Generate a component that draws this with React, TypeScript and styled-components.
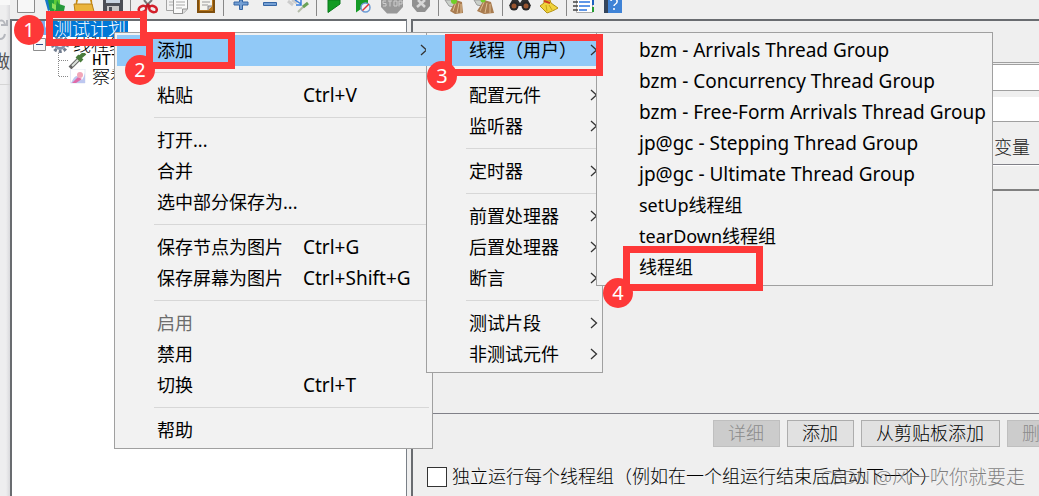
import React from "react";
import styled, { createGlobalStyle, css } from "styled-components";

const uiFont = '"Noto Sans", "Noto Sans CJK SC", sans-serif';
const swingFont = '"Liberation Serif", "Noto Sans CJK SC", serif';

const GlobalStyle = createGlobalStyle`
  * { box-sizing: border-box; }
  html, body { margin: 0; }
  body { background: #efefef; overflow: hidden; font-family: ${uiFont}; font-size: 18px; color: #000; }
  button, input { font: inherit; color: inherit; margin: 0; }
`;

const Desktop = styled.div`
  position: relative;
  display: flex;
  min-height: 100vh;
  overflow: hidden;
`;

const Backdrop = styled.aside`
  flex: 0 0 10px;
  display: flex;
  flex-direction: column;
  overflow: hidden;
  color: #555;
  background: linear-gradient(90deg, #eeeeef 0, #eeeeef 6px, #d9d9dc 10px);
`;

const BackdropIcon = styled.div`
  height: 46px;
  padding-top: 14px;
  border-top: 5px solid #f8f8f8;
  svg { display: block; }
`;

const BackdropLabel = styled.div`
  display: flex;
  justify-content: flex-end;
  height: 39px;
  line-height: 32px;
  border-bottom: 1px solid #d5d5d5;
  font-family: ${swingFont};
`;

const Window = styled.div`
  flex: 1;
  min-width: 0;
  display: flex;
  flex-direction: column;
`;

const Toolbar = styled.div`
  display: flex;
  height: 19px;
  padding-left: 1px;
  background: #efefef;
`;

const ToolButton = styled.button`
  flex: 0 0 29px;
  height: 16px;
  padding: 0;
  border: 0;
  background: none;
  display: flex;
  justify-content: center;
`;

const ToolDivider = styled.span`
  flex: 0 0 6px;
  height: 16px;
  display: flex;
  justify-content: center;
  &::after { content: ""; width: 1px; background: #888; }
`;

const Workspace = styled.div`
  flex: 1;
  display: flex;
  gap: 4px;
`;

const TreePane = styled.nav`
  flex: 0 0 397px;
  border: 1px solid #7a8087;
  border-top: 2px solid #696c70;
  border-left: 2px solid #696c70;
  border-bottom: 0;
  background: #fff;
`;

const TreeRow = styled.div<{ $indent: number }>`
  display: flex;
  align-items: center;
  gap: 3px;
  height: 16px;
  padding-left: ${(p) => p.$indent}px;
  overflow: hidden;
  white-space: nowrap;
  font-family: ${swingFont};
  font-weight: 300;
  line-height: 16px;
  svg { flex: none; }
`;

const SelectedLabel = styled.span`
  height: 16px;
  padding: 0 2px 0 1px;
  background: #0078d7;
  color: #fff;
`;

const MonoLabel = styled.span`
  font-family: "Liberation Mono", monospace;
  font-size: 16px;
  font-weight: 400;
`;

const Editor = styled.main`
  flex: 1;
  min-width: 0;
  display: flex;
  flex-direction: column;
  border-top: 2px solid #696c70;
  border-left: 2px solid #696c70;
  font-family: ${swingFont};
  font-weight: 300;
`;

const Fields = styled.div`
  display: flex;
  flex-direction: column;
  gap: 6px;
  margin-top: 41px;
  border-top: 1px solid #a0a0a0;
  padding-top: 1px;
`;

const TextField = styled.input`
  width: 100%;
  height: 27px;
  padding: 0 4px;
  border: 0;
  border-top: 1px solid #a0a0a0;
  border-bottom: 1px solid #a0a0a0;
  background: #fff;
  & + & { height: 25px; border-top: 0; }
`;

const SectionTitle = styled.div`
  height: 42px;
  padding: 6px 9px 0 0;
  line-height: 40px;
  text-align: right;
  color: #222;
`;

const VariableTable = styled.div`
  flex: none;
  height: 250px;
  border-top: 1px solid #808088;
  border-bottom: 1px solid #808088;
`;

const TableHeader = styled.div`
  height: 26px;
  border-top: 1px solid #fff;
  border-bottom: 2px solid #808080;
`;

const ButtonRow = styled.div`
  display: flex;
  gap: 7px;
  padding: 6px 0 0 300px;
  overflow: hidden;
`;

const PushButton = styled.button`
  flex: none;
  height: 27px;
  padding: 0 15px 0 14px;
  border: 1px solid #adadad;
  background: #e1e1e1;
  line-height: 24px;
  white-space: nowrap;
  &:disabled { background: #cccccc; border-color: #bfbfbf; color: #8b8b8b; }
`;

const Footer = styled.div`
  display: flex;
  align-items: center;
  padding: 20px 0 0 14px;
  white-space: nowrap;
`;

const CheckLabel = styled.label`
  display: flex;
  align-items: center;
  gap: 5px;
  height: 20px;
  line-height: 20px;
`;

const CheckBox = styled.input`
  appearance: none;
  flex: none;
  width: 20px;
  height: 20px;
  border: 1px solid #333;
  background: #fff;
`;

const Watermark = styled.div`
  position: absolute;
  right: 14px;
  bottom: 5px;
  font-size: 19px;
  line-height: 28px;
  font-weight: 300;
  color: rgba(90, 90, 90, 0.75);
`;

const MenuPanel = styled.div<{ $left: number; $width: number }>`
  position: absolute;
  top: 32px;
  left: ${(p) => p.$left}px;
  width: ${(p) => p.$width}px;
  padding: 2px;
  border: 1px solid #a0a0a0;
  background: #f2f2f2;
`;

const MenuItem = styled.button<{ $active?: boolean; $joined?: boolean }>`
  display: grid;
  grid-template-columns: 146px 1fr;
  align-items: center;
  position: relative;
  width: 100%;
  height: 31px;
  padding: 0 0 1px 40px;
  border: 0;
  background: none;
  text-align: left;
  line-height: 30px;
  white-space: nowrap;
  &:disabled { color: #6d6d6d; }
  ${(p) => p.$active && css`background: #91c9f7;`}
  ${(p) => p.$joined && css`box-shadow: -3px 0 #91c9f7, 2px 0 #91c9f7;`}
`;

const MenuText = styled.span<{ $latin?: boolean }>`
  height: 30px;
  font-size: ${(p) => (p.$latin ? 19 : 18)}px;
`;

const MenuArrow = styled.svg`
  position: absolute;
  right: 2px;
  top: 9px;
`;

const MenuRule = styled.hr`
  height: 1px;
  margin: 6px 1px 7px 37px;
  border: 0;
  background: #d7d7d7;
`;

const Highlight = styled.div<{ $x: number; $y: number; $w: number; $h: number }>`
  position: absolute;
  left: ${(p) => p.$x}px;
  top: ${(p) => p.$y}px;
  width: ${(p) => p.$w}px;
  height: ${(p) => p.$h}px;
  border: 7px solid #fe3838;
  pointer-events: none;
`;

const StepBadge = styled.div<{ $x: number; $y: number }>`
  position: absolute;
  left: ${(p) => p.$x}px;
  top: ${(p) => p.$y}px;
  width: 30px;
  height: 30px;
  border-radius: 50%;
  background: #fe3838;
  color: #fff;
  font-family: "Noto Sans", sans-serif;
  font-size: 20px;
  line-height: 29px;
  text-align: center;
`;

const icons: Record<string, React.ReactNode> = {
  新建: <path d="M3.500 0V12.500H20.500V0" fill="#f7f7f7" stroke="#8b8b8b" />,
  模板: (
    <>
      <path d="M2 0L5 11L10 9L8 0Z" fill="#1878c8" />
      <path d="M5 0L7 11L14 13L12 0Z" fill="#20a040" />
      <path d="M11 0V12L17 9V0Z" fill="#5ccb38" />
      <path d="M14 0L16 4L22 6L21 11L12 12Z" fill="#25993b" />
      <path d="M9 3l4 2v5l-4-2z" fill="#8be05a" />
    </>
  ),
  打开: (
    <>
      <path d="M4 0H20L21 11H3Z" fill="#c68a12" />
      <path d="M6 0H18L19 4H5Z" fill="#f2f2ee" />
      <path d="M2 4H20L22 11.500H3Z" fill="#eab43b" stroke="#b98016" />
    </>
  ),
  保存: (
    <>
      <path d="M2 0H22V13H2Z" fill="#4c4f56" />
      <path d="M5 0H19V3H5Z" fill="#c9d5e2" />
      <path d="M6 6H18V12H6Z" fill="#c8c8c8" />
      <path d="M8 7H11V12H8Z" fill="#4c4f56" />
    </>
  ),
  剪切: (
    <>
      <path d="M8 0L13 6M16 0L10 6" stroke="#777" strokeWidth="2" />
      <ellipse cx="6.500" cy="9" rx="4" ry="3" fill="none" stroke="#d3202b" strokeWidth="2.500" transform="rotate(-25 6.500 9)" />
      <ellipse cx="17" cy="9" rx="4" ry="3" fill="none" stroke="#d3202b" strokeWidth="2.500" transform="rotate(25 17 9)" />
      <path d="M9 6L12 3L15 6L12 8Z" fill="#c41a26" />
    </>
  ),
  复制: (
    <>
      <path d="M1.500 0V10.500H14V0" fill="#f1f1f1" stroke="#a3a3a3" />
      <path d="M4 2H8M4 5H8" stroke="#b0b0b0" />
      <path d="M8.500 0V13.500H18L22.500 9V0" fill="#fafafa" stroke="#929292" />
      <path d="M11 2H20M11 5H20M11 8H17" stroke="#aaa" />
      <path d="M17.500 13.500V9H22" fill="#ddd" stroke="#929292" />
    </>
  ),
  粘贴: (
    <>
      <path d="M4 0V12H20V0" fill="#b97920" stroke="#80500e" strokeWidth="2" />
      <path d="M6 0V10H14L18 6V0Z" fill="#f5f5ef" />
      <path d="M8 2H16M8 5H14" stroke="#999" />
      <path d="M14 10V6H18" fill="#ccc" stroke="#888" />
    </>
  ),
  展开: <path d="M10.500 0H13.500V2H19V5H13.500V9.500H10.500V5H5V2H10.500Z" fill="#75a0d4" stroke="#3465a4" />,
  折叠: <path d="M5.500 2.500H18.500V5.500H5.500Z" fill="#75a0d4" stroke="#3465a4" />,
  切换: (
    <>
      <path d="M1 1L6 5M5 0L10 3" stroke="#ccc" strokeWidth="3" />
      <path d="M8 0L14 4M14 0V5H9" stroke="#3a7edb" strokeWidth="1.500" fill="none" />
      <path d="M11 12L17 6" stroke="#b4bca9" strokeWidth="2" />
      <path d="M16 7L21 3" stroke="#69a257" strokeWidth="3" />
    </>
  ),
  启动: <path d="M6 0V12.500L18 4V0Z" fill="#129b24" stroke="#08791a" />,
  立即启动: (
    <>
      <path d="M5 0V12.500L17 4V0Z" fill="#149a26" />
      <circle cx="14.500" cy="7.500" r="4.500" fill="#eef3fa" stroke="#6c9bd4" strokeWidth="1.500" />
      <path d="M11.500 10.500L18 4" stroke="#df3434" strokeWidth="1.500" />
    </>
  ),
  停止: (
    <>
      <path d="M1 0V7L7 13.500H17L23 7V0Z" fill="#989898" />
      <path d="M6 1H3V3.500H6V6H3M8 1H12M10 1V6.500M14 1H17V6H14ZM19 6.500V1H22V4H19" fill="none" stroke="#cecece" />
    </>
  ),
  关闭: (
    <>
      <path d="M3 0V6L8 12H16L21 6V0Z" fill="#919191" />
      <path d="M9 0L16 7M16 0L8 7" stroke="#d8d8d8" strokeWidth="2.500" />
    </>
  ),
  清除: (
    <>
      <path d="M1 0L5 6L10 7L12 0Z" fill="#cad0ca" stroke="#999" />
      <path d="M12 0L18 2L19 13L11 14L6 11Z" fill="#a97c50" />
      <path d="M12 2L9 11M15 3L13 13M17 4L17 13" stroke="#dfbd91" />
      <circle cx="10" cy="1" r="3" fill="#70cf29" />
    </>
  ),
  清除全部: (
    <>
      <path d="M1 0L4 5L9 6L11 0Z" fill="#cad0ca" stroke="#999" />
      <path d="M11 0L18 2L21 13L11 14L4 11Z" fill="#a97c50" />
      <path d="M11 2L7 11M14 3L12 13M17 4L17 13" stroke="#dfbd91" />
      <circle cx="10" cy="0" r="2.500" fill="#70cf29" />
    </>
  ),
  搜索: (
    <>
      <path d="M4 0H10L12 3L14 0H20L23 6H1Z" fill="#303030" />
      <circle cx="6" cy="6" r="4.500" fill="#262626" />
      <circle cx="18" cy="6" r="4.500" fill="#262626" />
      <circle cx="6" cy="6" r="2.500" fill="#9a5630" />
      <circle cx="18" cy="6" r="2.500" fill="#9a5630" />
    </>
  ),
  重置搜索: (
    <>
      <path d="M7 0H13L14 3L21 8C18 10 13 12 10 13L3 6L7 3Z" fill="#f0d33c" stroke="#b39112" />
      <path d="M7 1L13 3" stroke="#cf3b22" strokeWidth="2" />
      <path d="M9 5L10 11M12 5L15 10" stroke="#c8a518" />
    </>
  ),
  函数助手: (
    <>
      <path d="M4.500 0V12.500H20.500V0" fill="#fff" stroke="#aaa" />
      <path d="M7 2H18M7 6H18M7 10H15" stroke="#2d76df" strokeWidth="1.500" />
      <path d="M1 2H6M1 6H6M1 10H6" stroke="#444" strokeWidth="1.500" />
      <path d="M21 0V5" stroke="#1d60c0" strokeWidth="2" />
      <path d="M21 7V12" stroke="#269d31" strokeWidth="2" />
    </>
  ),
  帮助文档: (
    <>
      <path d="M3 0H21V13H3Z" fill="#3f83d6" />
      <path d="M3 0H7V13H3Z" fill="#34455c" />
      <path d="M10 1C10-2 17-2 16 2C16 4 13 4 13 6M13 8V10" stroke="#fff" strokeWidth="1.500" fill="none" />
    </>
  ),
};

const toolGroups = [
  ["新建", "模板", "打开", "保存"],
  ["剪切", "复制", "粘贴"],
  ["展开", "折叠", "切换"],
  ["启动", "立即启动", "停止", "关闭"],
  ["清除", "清除全部"],
  ["搜索", "重置搜索"],
  ["函数助手", "帮助文档"],
];

type Entry = {
  label: string;
  keys?: string;
  sub?: boolean;
  active?: boolean;
  disabled?: boolean;
  latin?: boolean;
} | null;

const contextMenu: Entry[] = [
  { label: "添加", sub: true, active: true },
  null,
  { label: "粘贴", keys: "Ctrl+V" },
  null,
  { label: "打开..." },
  { label: "合并" },
  { label: "选中部分保存为..." },
  null,
  { label: "保存节点为图片", keys: "Ctrl+G" },
  { label: "保存屏幕为图片", keys: "Ctrl+Shift+G" },
  null,
  { label: "启用", disabled: true },
  { label: "禁用" },
  { label: "切换", keys: "Ctrl+T" },
  null,
  { label: "帮助" },
];

const addMenu: Entry[] = [
  { label: "线程（用户）", sub: true, active: true },
  null,
  { label: "配置元件", sub: true },
  { label: "监听器", sub: true },
  null,
  { label: "定时器", sub: true },
  null,
  { label: "前置处理器", sub: true },
  { label: "后置处理器", sub: true },
  { label: "断言", sub: true },
  null,
  { label: "测试片段", sub: true },
  { label: "非测试元件", sub: true },
];

const threadMenu: Entry[] = [
  { label: "bzm - Arrivals Thread Group", latin: true },
  { label: "bzm - Concurrency Thread Group", latin: true },
  { label: "bzm - Free-Form Arrivals Thread Group", latin: true },
  { label: "jp@gc - Stepping Thread Group", latin: true },
  { label: "jp@gc - Ultimate Thread Group", latin: true },
  { label: "setUp线程组" },
  { label: "tearDown线程组" },
  { label: "线程组" },
];

function Menu({ entries, left, width, joined }: { entries: Entry[]; left: number; width: number; joined?: boolean }) {
  return (
    <MenuPanel role="menu" $left={left} $width={width}>
      {entries.map((entry, i) =>
        entry === null ? (
          <MenuRule key={i} />
        ) : (
          <MenuItem key={i} role="menuitem" disabled={entry.disabled} $active={entry.active} $joined={joined && entry.active}>
            <MenuText $latin={entry.latin}>{entry.label}</MenuText>
            <MenuText $latin>{entry.keys}</MenuText>
            {entry.sub && (
              <MenuArrow width="8" height="12" viewBox="0 0 8 12" aria-hidden>
                <path d="M1 1L6.500 6L1 11" fill="none" stroke="#333" strokeWidth="1.300" />
              </MenuArrow>
            )}
          </MenuItem>
        )
      )}
    </MenuPanel>
  );
}

export default function App() {
  return (
    <Desktop>
      <GlobalStyle />
      <Backdrop>
        <BackdropIcon>
          <svg width="8" height="22" viewBox="0 0 8 22" fill="none" stroke="#b5b7bd" strokeWidth="2" aria-hidden>
            <path d="M0 2Q3 0 5 5M7 1V6H1M0 20Q4 20 5 15" />
          </svg>
        </BackdropIcon>
        <BackdropLabel>做</BackdropLabel>
      </Backdrop>
      <Window>
        <Toolbar role="toolbar">
          {toolGroups.map((group, g) => (
            <React.Fragment key={g}>
              {g > 0 && <ToolDivider />}
              {group.map((name) => (
                <ToolButton key={name} aria-label={name}>
                  <svg width="24" height="16" viewBox="0 0 24 16" fill="none" aria-hidden>
                    {icons[name]}
                  </svg>
                </ToolButton>
              ))}
            </React.Fragment>
          ))}
        </Toolbar>
        <Workspace>
          <TreePane>
            <TreeRow $indent={22}>
              <svg width="16" height="16" viewBox="0 0 16 16" aria-hidden>
                <path d="M5 0H11V5L15 14H1L5 5Z" fill="#7caef0" />
              </svg>
              <SelectedLabel>测试计划</SelectedLabel>
            </TreeRow>
            <TreeRow $indent={21}>
              <svg width="14" height="14" viewBox="0 0 14 14" aria-hidden>
                <path d="M.5.5H12.500V12.500H.5Z" fill="#f8f8f8" stroke="#8d8d8d" />
                <path d="M3 6.500H10" stroke="#30508a" />
              </svg>
              <svg width="20" height="16" viewBox="0 0 20 16" aria-hidden>
                <circle cx="10" cy="7" r="7.500" fill="none" stroke="#727d8f" strokeWidth="3" strokeDasharray="3 2" />
                <circle cx="10" cy="7" r="4.500" fill="#eef2f7" stroke="#8292ab" strokeWidth="3" />
              </svg>
              线程组
            </TreeRow>
            <TreeRow $indent={46}>
              <svg width="31" height="16" viewBox="0 0 31 16" aria-hidden>
                <path d="M.5 0V16M1 7.500H11" stroke="#888" strokeDasharray="1 1" />
                <path d="M12 15L22 5" stroke="#666" strokeWidth="4" />
                <path d="M14 13L21 6" stroke="#dde3dd" strokeWidth="2" />
                <path d="M19 3L24 8M21 5L27 0" stroke="#4a7c3b" strokeWidth="4" />
              </svg>
              <MonoLabel>HTTP请求</MonoLabel>
            </TreeRow>
            <TreeRow $indent={46}>
              <svg width="31" height="16" viewBox="0 0 31 16" aria-hidden>
                <path d="M.5 0V8M1 7.500H11" stroke="#888" strokeDasharray="1 1" />
                <path d="M12.500 0V14H27V0Z" fill="#fff" stroke="#e5e9f4" />
                <path d="M13 14Q18 3 21 9T27 4V14Z" fill="#bdc7f0" />
                <path d="M14 14L20 8L24 10L18 14Z" fill="#e06aa8" />
                <circle cx="22" cy="6" r="3" fill="#f2a6b8" />
              </svg>
              察看结果树
            </TreeRow>
          </TreePane>
          <Editor>
            <Fields>
              <TextField aria-label="名称" />
              <TextField aria-label="注释" />
            </Fields>
            <SectionTitle>变量</SectionTitle>
            <VariableTable>
              <TableHeader />
            </VariableTable>
            <ButtonRow>
              <PushButton disabled>详细</PushButton>
              <PushButton>添加</PushButton>
              <PushButton>从剪贴板添加</PushButton>
              <PushButton disabled>删除</PushButton>
            </ButtonRow>
            <Footer>
              <CheckLabel>
                <CheckBox type="checkbox" />
                独立运行每个线程组（例如在一个组运行结束后启动下一个）
              </CheckLabel>
            </Footer>
          </Editor>
        </Workspace>
      </Window>
      <Watermark>CSDN @风一吹你就要走</Watermark>
      <Menu entries={contextMenu} left={114} width={319} />
      <Menu entries={addMenu} left={426} width={177} joined />
      <Menu entries={threadMenu} left={596} width={397} />
      <Highlight $x={46} $y={11} $w={101} $h={35} />
      <Highlight $x={146} $y={32} $w={89} $h={37} />
      <Highlight $x={445} $y={34} $w={158} $h={42} />
      <Highlight $x={623} $y={246} $w={140} $h={45} />
      <StepBadge $x={14} $y={15}>1</StepBadge>
      <StepBadge $x={125} $y={55}>2</StepBadge>
      <StepBadge $x={427} $y={61}>3</StepBadge>
      <StepBadge $x={603} $y={278}>4</StepBadge>
    </Desktop>
  );
}
